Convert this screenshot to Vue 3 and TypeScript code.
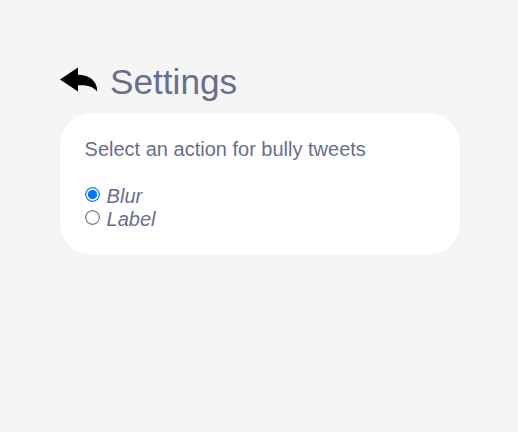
<script setup lang="ts">
import { ref } from 'vue'

type Action = 'blur' | 'label'
const options: { value: Action; text: string }[] = [
  { value: 'blur', text: 'Blur' },
  { value: 'label', text: 'Label' },
]
const action = ref<Action>('blur')
</script>

<template>
  <main class="page">
    <header class="header">
      <svg class="back" viewBox="0 0 38 26" aria-hidden="true">
        <path d="M0 12.4 L18 0.6 V7.8 C28 8 37.4 13 37.2 24.4 C32 19 27 18 18 18.3 V24.6 Z" />
      </svg>
      <h1 class="title">Settings</h1>
    </header>
    <section class="card">
      <p class="prompt">Select an action for bully tweets</p>
      <label v-for="o in options" :key="o.value" class="option">
        <input v-model="action" class="radio" type="radio" name="action" :value="o.value" />
        <span>{{ o.text }}</span>
      </label>
    </section>
  </main>
</template>

<style>
body {
  background: #f5f5f5;
}
</style>

<style scoped>
.page {
  box-sizing: border-box;
  width: 518px;
  height: 432px;
  padding: 62px 58px 0 60px;
  color: #686e8c;
  font-family: "Liberation Sans", Arial, sans-serif;
}
.header {
  display: flex;
  height: 51px;
}
.back {
  width: 38px;
  height: 26px;
  margin: 5px 12px 0 0;
}
.title {
  margin: 0;
  font-size: 35.2px;
  font-weight: 400;
  line-height: 40px;
}
.card {
  box-sizing: border-box;
  height: 142px;
  padding: 25px 25px 25px 24.6px;
  border-radius: 32px;
  background: #fff;
}
.prompt {
  margin: 0 0 24px;
  font-size: 20px;
  line-height: 23px;
}
.option {
  display: flex;
  font-size: 20px;
  font-style: italic;
  line-height: 23px;
}
.radio {
  --ring: #767676;
  --dot: #fff;
  appearance: none;
  width: 15px;
  height: 15px;
  margin: 2px 7px 0 0;
  border-radius: 50%;
  background: radial-gradient(circle, var(--dot) 4.1px, #fff 5.1px, #fff 5.7px, var(--ring) 6.6px, var(--ring) 7px, #fff 7.9px);
}
.radio:checked {
  --ring: #0075ff;
  --dot: #0075ff;
}
</style>
